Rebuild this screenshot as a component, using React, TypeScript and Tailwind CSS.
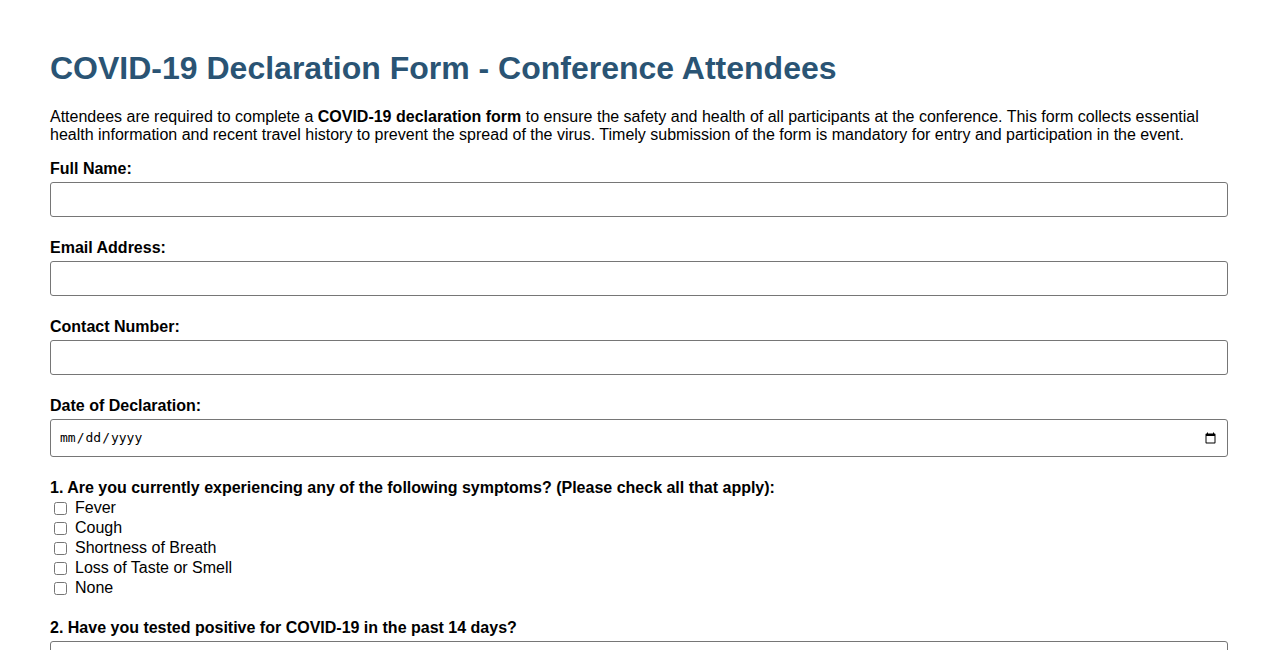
import React from "react";

const symptoms = ["Fever", "Cough", "Shortness of Breath", "Loss of Taste or Smell", "None"];

const TextField = ({ label, type = "text" }: { label: string; type?: string }) => (
  <div className="mb-[22px]">
    <label className="block font-bold leading-[18px] mb-[4px]">{label}</label>
    <input
      type={type}
      className="block w-full h-[35px] px-2 border border-[#767676] rounded-[3px] bg-white outline-none"
    />
  </div>
);

export default function App() {
  return (
    <div className="min-h-screen bg-white text-black font-['Liberation_Sans',Arial,sans-serif] text-[16px]">
      <div className="px-[50px] pt-[50px]">
        <h1 className="text-[32px] font-bold leading-[37px] text-[#2a5474] mb-[21px]">
          COVID-19 Declaration Form - Conference Attendees
        </h1>
        <p className="leading-[18px] mb-[16px]">
          Attendees are required to complete a <strong>COVID-19 declaration form</strong> to ensure the
          safety and health of all participants at the conference. This form collects essential health
          information and recent travel history to prevent the spread of the virus. Timely submission of
          the form is mandatory for entry and participation in the event.
        </p>
        <form>
          <TextField label="Full Name:" />
          <TextField label="Email Address:" type="email" />
          <TextField label="Contact Number:" type="tel" />
          <div className="mb-[22px]">
            <label className="block font-bold leading-[18px] mb-[4px]">Date of Declaration:</label>
            <input
              type="date"
              className="block w-full h-[38px] px-2 border border-[#767676] rounded-[3px] bg-white text-[13px] font-['DejaVu_Sans_Mono',monospace] outline-none"
            />
          </div>
          <div className="mb-[21px]">
            <label className="block font-bold leading-[18px] mb-[1px]">
              1. Are you currently experiencing any of the following symptoms? (Please check all that apply):
            </label>
            {symptoms.map((s) => (
              <div key={s} className="flex items-center h-[20px]">
                <input type="checkbox" className="ml-[4px] mr-[8px] w-[13px] h-[13px]" />
                <span className="leading-[20px]">{s}</span>
              </div>
            ))}
          </div>
          <div className="mb-[21px]">
            <label className="block font-bold leading-[18px] mb-[4px]">
              2. Have you tested positive for COVID-19 in the past 14 days?
            </label>
            <select className="block w-full h-[35px] px-2 border border-[#767676] rounded-[3px] bg-white">
              <option>Select</option>
            </select>
          </div>
        </form>
      </div>
    </div>
  );
}
